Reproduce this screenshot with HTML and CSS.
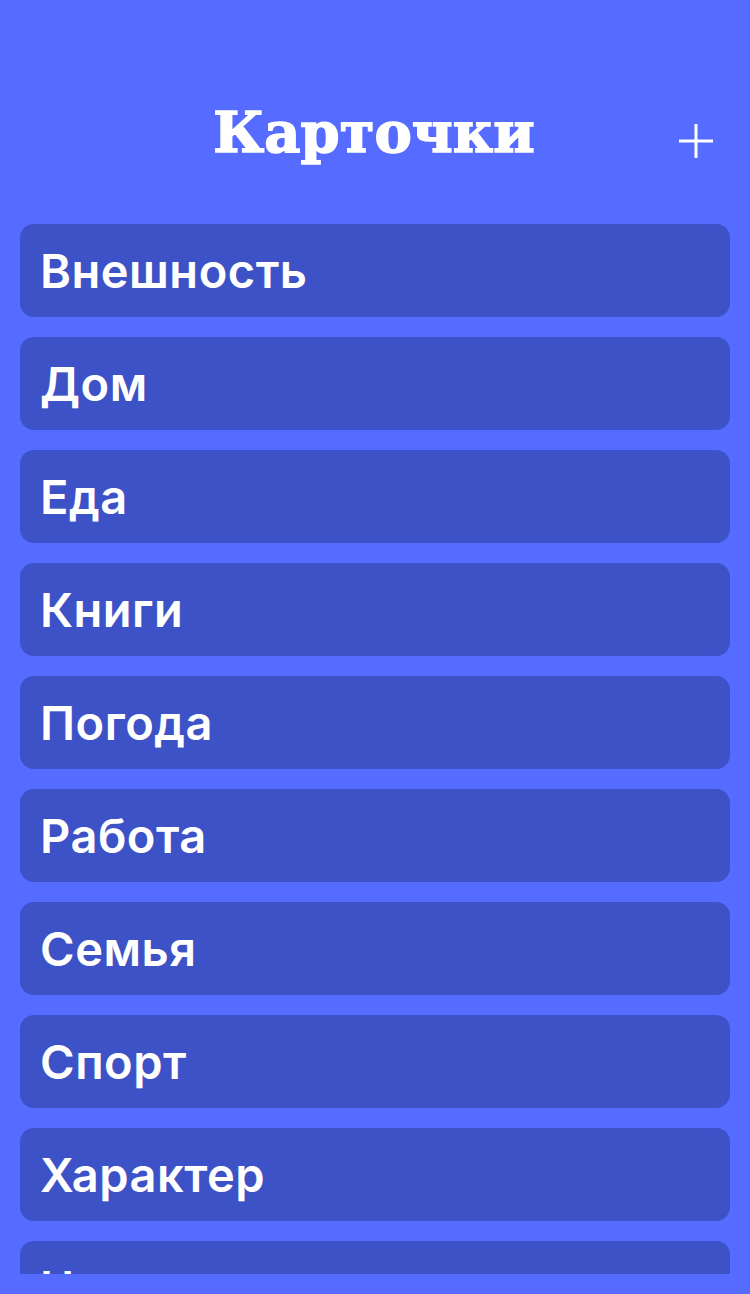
FILE: index.html
```html
<!DOCTYPE html>
<html lang="ru">
<head>
<meta charset="utf-8">
<title>Карточки</title>
<link rel="stylesheet" href="styles.css">
</head>
<body>
<div class="screen">
  <header class="header">
    <h1 class="title">Карточки</h1>
    <button class="add" aria-label="Добавить">
      <svg width="36" height="36" viewBox="0 0 36 36"><path d="M18 1V35M1 18H35" stroke="#fff" stroke-width="3" fill="none"/></svg>
    </button>
  </header>
  <main class="list">
    <div class="card">Внешность</div>
    <div class="card">Дом</div>
    <div class="card">Еда</div>
    <div class="card">Книги</div>
    <div class="card">Погода</div>
    <div class="card">Работа</div>
    <div class="card">Семья</div>
    <div class="card">Спорт</div>
    <div class="card">Характер</div>
    <div class="card">Цвета</div>
  </main>
</div>
</body>
</html>
```
FILE: styles.css
```css
html, body {
  margin: 0;
  padding: 0;
  background: #566bff;
}
.screen {
  width: 750px;
  height: 1294px;
  display: flex;
  flex-direction: column;
  overflow: hidden;
}
.header {
  position: relative;
  height: 224px;
  flex: none;
  display: flex;
  align-items: flex-start;
  justify-content: center;
}
.title {
  margin: 94px 0 0 -2px;
  font-family: "DejaVu Serif", serif;
  font-weight: bold;
  font-size: 56px;
  line-height: 76px;
  color: #fff;
  -webkit-text-stroke: 1.5px #fff;
  letter-spacing: 0;
}
.add {
  position: absolute;
  right: 36px;
  top: 123px;
  width: 36px;
  height: 36px;
  padding: 0;
  border: 0;
  background: none;
  display: block;
}
.add svg { display: block; }
.list {
  flex: 1;
  margin: 0 20px 20px;
  display: flex;
  flex-direction: column;
  gap: 20px;
  overflow: hidden;
}
.card {
  flex: none;
  height: 93px;
  box-sizing: border-box;
  padding: 0 20px;
  border-radius: 14px;
  background: #3d52c6;
  color: #fff;
  font-family: Inter, "Noto Sans", sans-serif;
  font-weight: 600;
  font-size: 47px;
  letter-spacing: 0.5px;
  line-height: 93px;
}
```
